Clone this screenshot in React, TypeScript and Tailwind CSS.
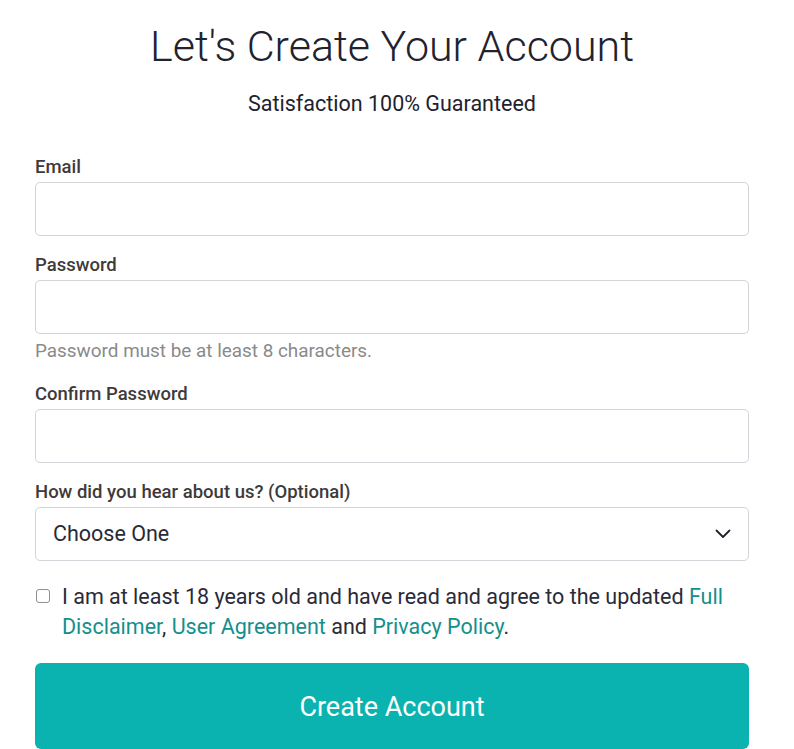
import React from "react";

const font = { fontFamily: "Roboto, 'Noto Sans', sans-serif" };

function Field({ label, children }: { label: string; children: React.ReactNode }) {
  return (
    <div className="flex flex-col">
      <label className="text-[18.5px] leading-6 font-medium text-[#3f3a3a] mb-[3px]">{label}</label>
      {children}
    </div>
  );
}

function Input({ type = "text" }: { type?: string }) {
  return (
    <input
      type={type}
      className="h-[54px] w-full rounded-[5px] border border-[#d3d3d9] bg-white px-4 outline-none"
    />
  );
}

export default function App() {
  return (
    <div className="min-h-screen bg-white" style={font}>
      <div className="w-[714px] ml-[35px] pt-[20px] flex flex-col">
        <h1 className="text-center text-[43px] leading-[52px] font-light text-[#22222e]">
          Let's Create Your Account
        </h1>
        <p className="text-center text-[21.5px] leading-7 text-[#22222e] mt-[18px]">
          Satisfaction 100% Guaranteed
        </p>

        <div className="mt-[37px] flex flex-col">
          <Field label="Email">
            <Input type="email" />
          </Field>
          <div className="mt-[17px]">
            <Field label="Password">
              <Input type="password" />
            </Field>
          </div>
          <p className="mt-[5px] text-[18.9px] leading-6 text-[#8a8a8a]">
            Password must be at least 8 characters.
          </p>
          <div className="mt-[19px]">
            <Field label="Confirm Password">
              <Input type="password" />
            </Field>
          </div>
          <div className="mt-[17px]">
            <Field label="How did you hear about us? (Optional)">
              <div className="h-[54px] w-full rounded-[5px] border border-[#d3d3d9] bg-white pl-[17px] pr-[17px] flex items-center justify-between">
                <span className="text-[21.5px] text-[#2a2a36]">Choose One</span>
                <svg width="16" height="10" viewBox="0 0 16 10" fill="none">
                  <path d="M1.5 1.5 L8 8 L14.5 1.5" stroke="#22222e" strokeWidth="1.8" strokeLinecap="round" strokeLinejoin="round" />
                </svg>
              </div>
            </Field>
          </div>

          <div className="mt-[21px] flex items-start">
            <span className="mt-[7px] ml-[1px] w-[14px] h-[14px] shrink-0 rounded-[3px] border border-[#8f8f8f] bg-white" />
            <p className="ml-[12px] text-[21.5px] leading-[30px] text-[#2a2a38]">
              I am at least 18 years old and have read and agree to the updated{" "}
              <a className="text-[#148f8e]">Full Disclaimer</a>,{" "}
              <a className="text-[#148f8e]">User Agreement</a> and{" "}
              <a className="text-[#148f8e]">Privacy Policy</a>.
            </p>
          </div>

          <button className="mt-[21px] h-[86px] w-full rounded-[6px] bg-[#0ab3b0] text-white text-[27px] pt-[3px]">
            Create Account
          </button>
        </div>
      </div>
    </div>
  );
}
